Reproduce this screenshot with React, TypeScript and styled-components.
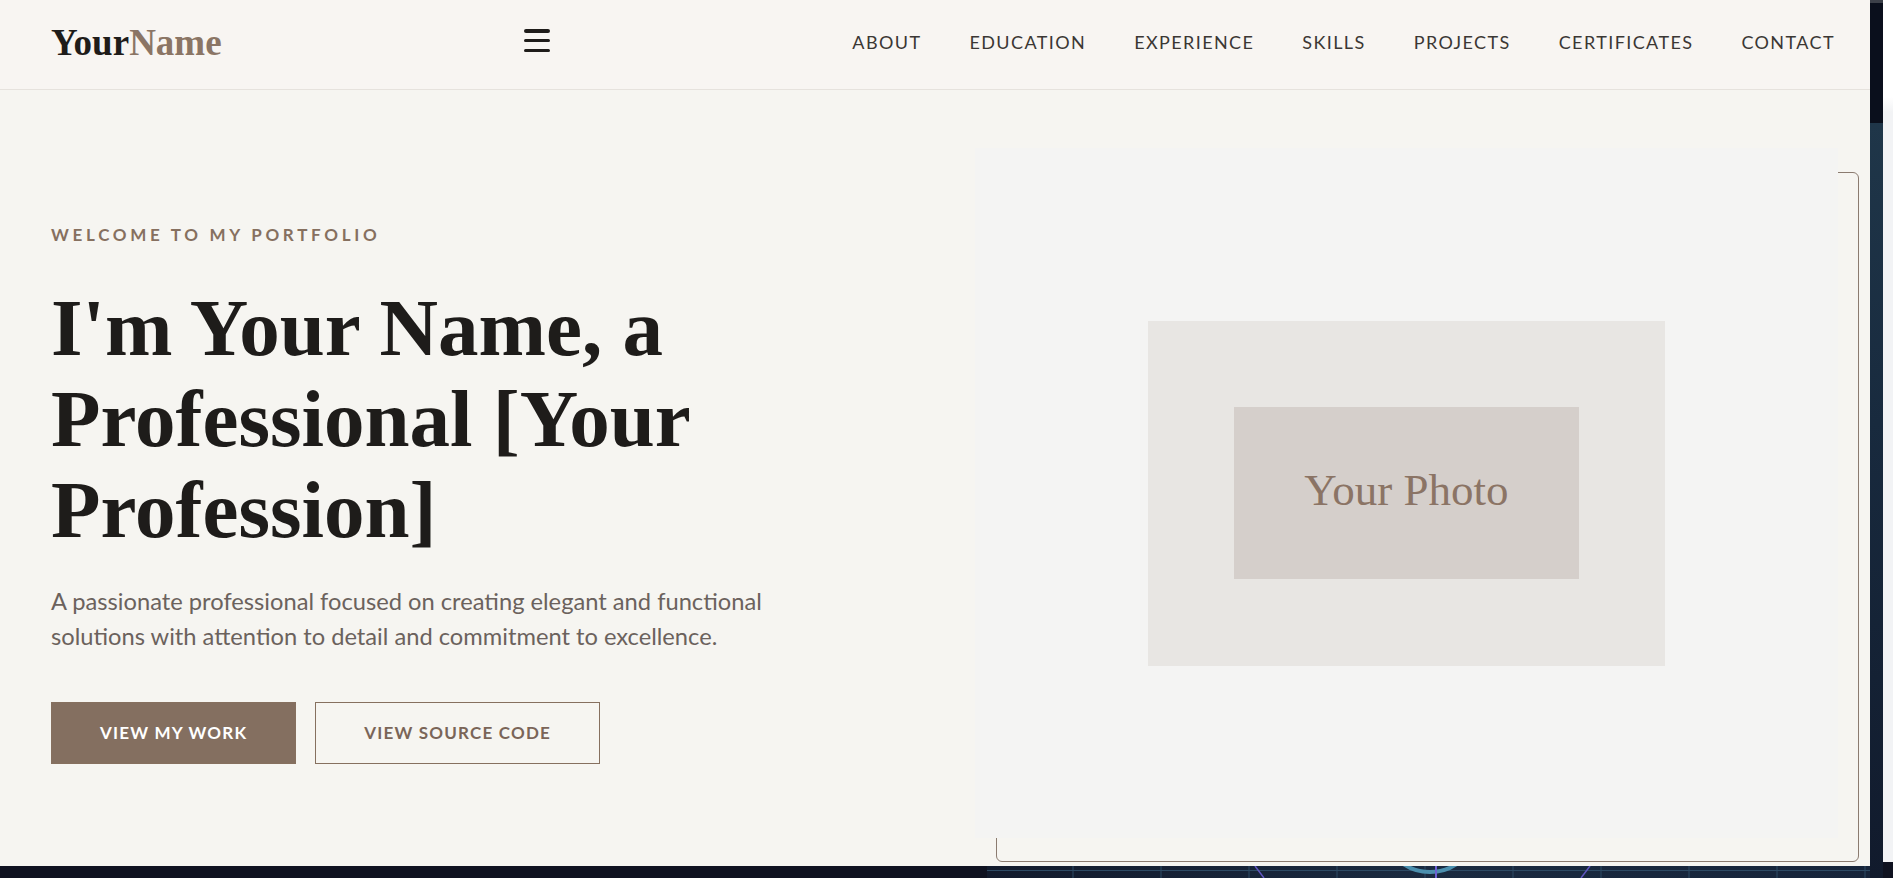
import styled, { createGlobalStyle } from 'styled-components';

const GlobalStyle = createGlobalStyle`
  html, body {
    margin: 0;
    padding: 0;
    background: #0f1220;
    overflow: hidden;
  }
  * {
    box-sizing: border-box;
  }
`;

const Shell = styled.div`
  display: flex;
  width: 1893px;
  height: 878px;
  background: #0f1220;
  overflow: hidden;
`;

const Stage = styled.div`
  width: 1870px;
  display: flex;
  flex-direction: column;
`;

const Page = styled.div`
  height: 866px;
  background: #f6f5f1;
  display: flex;
  flex-direction: column;
  overflow: hidden;
`;

const EdgeStrip = styled.div`
  width: 13px;
  border-top: 3px solid #3c4049;
  background: linear-gradient(
    to bottom,
    #0a0f1c 0,
    #0a0f1c 120px,
    #1f3649 120px,
    #182a3e 420px,
    #111a2c 100%
  );
`;

const ScrollStrip = styled.div`
  width: 10px;
  background: linear-gradient(
    to bottom,
    #ffffff 0,
    #ffffff 97px,
    #f2f3f5 112px,
    #f2f3f5 862px,
    #0f1220 862px
  );
`;

const Backdrop = styled.div`
  height: 12px;
  line-height: 0;
`;

const Header = styled.header`
  height: 90px;
  flex-shrink: 0;
  display: flex;
  align-items: center;
  justify-content: space-between;
  padding: 0 35px 6px 51px;
  background: #f8f5f2;
  border-bottom: 1px solid #e6e2dd;
`;

const Logo = styled.div`
  font-family: 'Liberation Serif', 'Times New Roman', serif;
  font-weight: 700;
  font-size: 37px;
  line-height: 1;
  color: #1f1c1a;
  margin-top: 2px;
`;

const LogoAccent = styled.span`
  color: #8b7565;
`;

const Burger = styled.button`
  width: 26px;
  height: 23px;
  padding: 0;
  border: 0;
  background: none;
  display: flex;
  flex-direction: column;
  justify-content: space-between;
  margin-top: -2px;
  cursor: pointer;
`;

const BurgerBar = styled.span`
  display: block;
  height: 3.5px;
  border-radius: 2px;
  background: #1f1c1a;
`;

const Nav = styled.nav`
  display: flex;
  gap: 48px;
`;

const NavLink = styled.a`
  font-family: Lato, 'Open Sans', sans-serif;
  font-size: 18px;
  letter-spacing: 1.4px;
  color: #3b3734;
  text-decoration: none;
  text-transform: uppercase;
`;

const Hero = styled.section`
  flex: 1;
  display: grid;
  grid-template-columns: 1fr 1fr;
  gap: 61px;
  align-items: center;
  padding: 58px 32px 28px 51px;
`;

const Intro = styled.div`
  display: flex;
  flex-direction: column;
  align-items: flex-start;
`;

const Eyebrow = styled.p`
  margin: 0 0 36px;
  font-family: Lato, sans-serif;
  font-weight: 700;
  font-size: 17px;
  line-height: 25px;
  letter-spacing: 3.7px;
  color: #86705f;
  text-transform: uppercase;
`;

const Title = styled.h1`
  margin: 0 0 28px;
  max-width: 720px;
  font-family: 'Liberation Serif', 'Times New Roman', serif;
  font-weight: 700;
  font-size: 81px;
  line-height: 91px;
  color: #1e1c1a;
`;

const Lead = styled.p`
  margin: 0 0 48px;
  max-width: 770px;
  font-family: Lato, sans-serif;
  font-size: 23.7px;
  line-height: 35px;
  color: #6b625d;
`;

const Actions = styled.div`
  display: flex;
  gap: 19px;
`;

const Button = styled.a<{ $variant: 'solid' | 'outline' }>`
  display: inline-block;
  padding: 20px 48px;
  font-family: Lato, sans-serif;
  font-weight: 700;
  font-size: 17px;
  line-height: 20px;
  letter-spacing: 1.2px;
  text-transform: uppercase;
  text-decoration: none;
  border: 1px solid #86705f;
  background: ${({ $variant }) => ($variant === 'solid' ? '#846f60' : 'transparent')};
  color: ${({ $variant }) => ($variant === 'solid' ? '#ffffff' : '#7a6558')};
`;

const Visual = styled.div`
  position: relative;
  height: 690px;
  isolation: isolate;

  &::before {
    content: '';
    position: absolute;
    inset: 0;
    border: 1px solid #8b7b70;
    border-radius: 6px;
    transform: translate(21px, 24px);
    z-index: -1;
  }
`;

const Panel = styled.div`
  height: 100%;
  background: #f4f4f3;
  display: flex;
  align-items: center;
  justify-content: center;
`;

const PhotoFrame = styled.div`
  width: 60%;
  height: 50%;
  background: #e8e6e3;
  display: flex;
  align-items: center;
  justify-content: center;
`;

const PhotoInner = styled.div`
  width: 66.7%;
  height: 50%;
  background: #d5cfcb;
  display: flex;
  align-items: center;
  justify-content: center;
  padding-bottom: 6px;
  font-family: 'Liberation Serif', 'Times New Roman', serif;
  font-size: 45px;
  color: #8b7465;
`;

const navItems = ['About', 'Education', 'Experience', 'Skills', 'Projects', 'Certificates', 'Contact'];

function BackdropArt() {
  const lines = [];
  for (let x = 1073; x < 1870; x += 88) {
    lines.push(<line key={x} x1={x} y1={0} x2={x} y2={12} stroke="#2d4a64" strokeWidth={1} />);
  }
  return (
    <svg width="1870" height="12" viewBox="0 0 1870 12">
      <defs>
        <linearGradient id="grid-bg" x1="0" x2="1" y1="0" y2="0">
          <stop offset="0" stopColor="#121a2c" />
          <stop offset="0.5" stopColor="#1a2a40" />
          <stop offset="1" stopColor="#16243a" />
        </linearGradient>
      </defs>
      <rect x="0" y="0" width="1870" height="12" fill="#0f1220" />
      <rect x="987" y="0" width="883" height="12" fill="url(#grid-bg)" />
      {lines}
      <line x1="987" y1="4.5" x2="1870" y2="4.5" stroke="#2d4a64" strokeWidth={1} />
      <circle cx="1430" cy="-42" r="48" fill="none" stroke="#4b8fae" strokeWidth={4} />
      <line x1="1436" y1="0" x2="1436" y2="12" stroke="#6c5fd2" strokeWidth={2} />
      <line x1="1255" y1="0" x2="1264" y2="12" stroke="#5f55c0" strokeWidth={1.5} />
      <line x1="1590" y1="0" x2="1581" y2="12" stroke="#5f55c0" strokeWidth={1.5} />
    </svg>
  );
}

export default function App() {
  return (
    <>
      <GlobalStyle />
      <Shell>
        <Stage>
          <Page>
            <Header>
              <Logo>
                Your<LogoAccent>Name</LogoAccent>
              </Logo>
              <Burger aria-label="Menu">
                <BurgerBar />
                <BurgerBar />
                <BurgerBar />
              </Burger>
              <Nav>
                {navItems.map((item) => (
                  <NavLink key={item} href={`#${item.toLowerCase()}`}>
                    {item}
                  </NavLink>
                ))}
              </Nav>
            </Header>

            <Hero>
              <Intro>
                <Eyebrow>Welcome to my portfolio</Eyebrow>
                <Title>I'm Your Name, a Professional [Your Profession]</Title>
                <Lead>
                  A passionate professional focused on creating elegant and functional solutions with
                  attention to detail and commitment to excellence.
                </Lead>
                <Actions>
                  <Button $variant="solid" href="#projects">
                    View My Work
                  </Button>
                  <Button $variant="outline" href="#source">
                    View Source Code
                  </Button>
                </Actions>
              </Intro>

              <Visual>
                <Panel>
                  <PhotoFrame>
                    <PhotoInner>Your Photo</PhotoInner>
                  </PhotoFrame>
                </Panel>
              </Visual>
            </Hero>
          </Page>
          <Backdrop>
            <BackdropArt />
          </Backdrop>
        </Stage>
        <EdgeStrip />
        <ScrollStrip />
      </Shell>
    </>
  );
}
